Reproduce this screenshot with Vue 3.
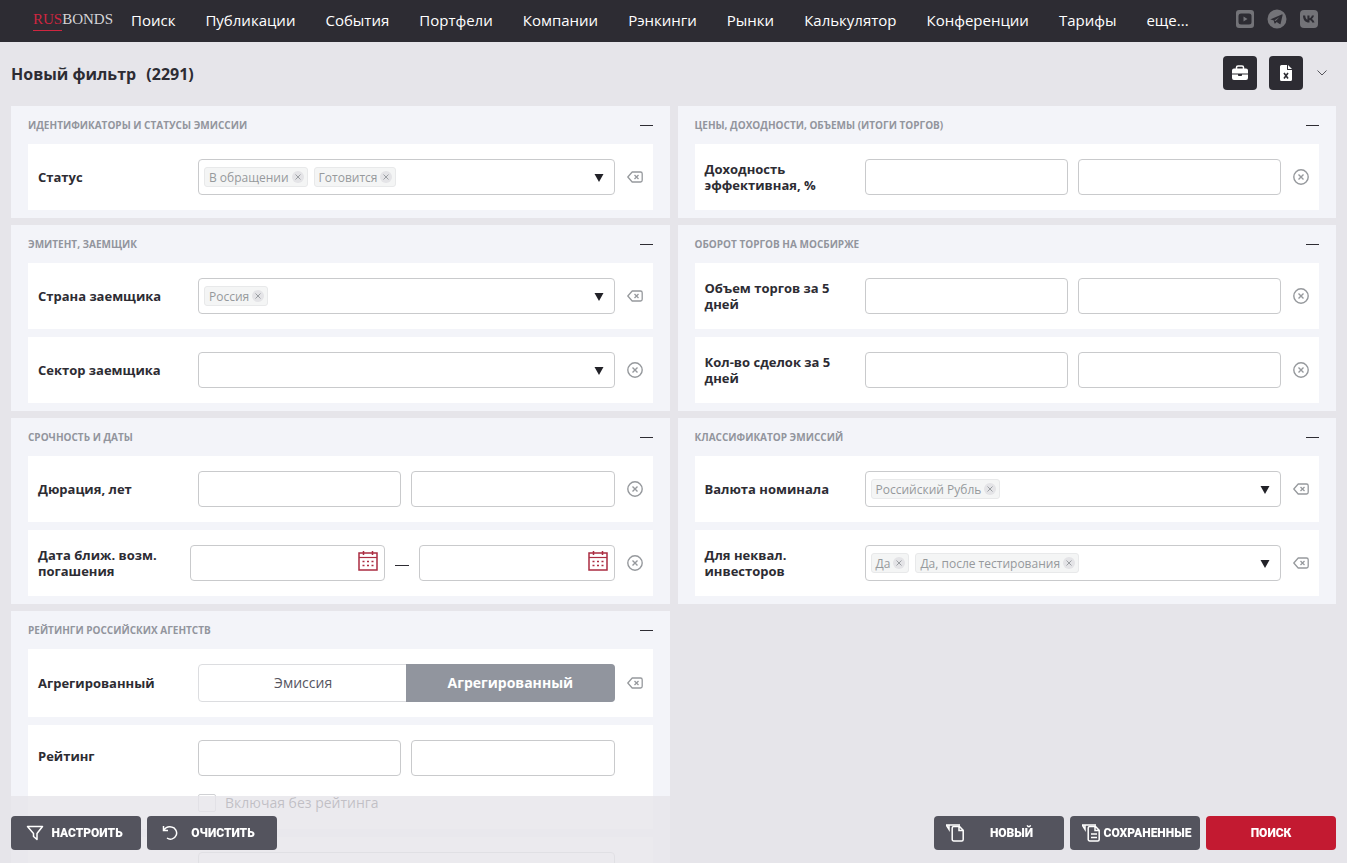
<script setup>
import { ref } from 'vue'

const nav = ['Поиск', 'Публикации', 'События', 'Портфели', 'Компании', 'Рэнкинги', 'Рынки', 'Калькулятор', 'Конференции', 'Тарифы', 'еще...']

const panels = [
  { title: 'Идентификаторы и статусы эмиссии', rows: [
    { id: 'status', label: 'Статус', type: 'select', tags: ['В обращении', 'Готовится'], filled: true },
  ] },
  { title: 'Цены, доходности, объемы (итоги торгов)', rows: [
    { id: 'yield', label: 'Доходность эффективная, %', type: 'range' },
  ] },
  { title: 'Эмитент, заемщик', rows: [
    { id: 'country', label: 'Страна заемщика', type: 'select', tags: ['Россия'], filled: true },
    { id: 'sector', label: 'Сектор заемщика', type: 'select', tags: [] },
  ] },
  { title: 'Оборот торгов на Мосбирже', rows: [
    { id: 'volume', label: 'Объем торгов за 5 дней', type: 'range' },
    { id: 'deals', label: 'Кол-во сделок за 5 дней', type: 'range' },
  ] },
  { title: 'Срочность и даты', rows: [
    { id: 'duration', label: 'Дюрация, лет', type: 'range' },
    { id: 'date', label: 'Дата ближ. возм. погашения', type: 'dates' },
  ] },
  { title: 'Классификатор эмиссий', rows: [
    { id: 'currency', label: 'Валюта номинала', type: 'select', tags: ['Российский Рубль'], filled: true },
    { id: 'unqualified', label: 'Для неквал. инвесторов', type: 'select', tags: ['Да', 'Да, после тестирования'], filled: true },
  ] },
  { title: 'Рейтинги российских агентств', rows: [
    { id: 'aggregated', label: 'Агрегированный', type: 'segment', filled: true },
    { id: 'rating', label: 'Рейтинг', type: 'rating' },
    { id: 'agency', label: '', type: 'select', tags: [] },
  ] },
]

const segment = ref('Агрегированный')
</script>

<template>
  <div class="page">
    <header class="topbar">
      <a class="logo" href="#"><span class="logo-red">RUS</span>BONDS</a>
      <nav class="nav">
        <a v-for="item in nav" :key="item" href="#">{{ item }}</a>
      </nav>
      <div class="social">
        <a href="#" aria-label="YouTube">
          <svg width="20" height="20" viewBox="0 0 20 20"><rect x="1" y="1" width="18" height="18" rx="3" fill="#737378" /><rect x="3.500" y="4.500" width="13" height="11" rx="2.500" fill="#2d2c33" /><path d="M8.500 7.500v5l4-2.500z" fill="#737378" /></svg>
        </a>
        <a href="#" aria-label="Telegram">
          <svg width="20" height="20" viewBox="0 0 20 20"><circle cx="10" cy="10" r="9.500" fill="#737378" /><path d="M3.600 10.200 14.800 5.400c.5-.2.9.1.8.7l-2 8.600c-.1.6-.5.7-1 .4l-2.900-2.100-1.500 1.400c-.4.4-.7.2-.8-.2l-.6-2.700-3-.9c-.6-.1-.6-.2-.2-.4z" fill="#2d2c33" /><path d="M7.400 11.500 12.500 8 8.700 12z" fill="#737378" /></svg>
        </a>
        <a href="#" aria-label="VK">
          <svg width="20" height="20" viewBox="0 0 20 20"><rect x="1" y="1" width="18" height="18" rx="4" fill="#737378" /><path d="M4 6.500h2.200c.2 2.500 1.200 4 2.200 4.300V6.500h2.100v2.700c1.100-.2 2-1.300 2.400-2.700H15c-.3 1.500-1.200 2.800-2.200 3.500 1.100.5 2.100 1.600 2.700 3.500h-2.300c-.4-1.200-1.400-2.200-2.700-2.400v2.400h-.4C6.300 13.500 4.100 10.900 4 6.500z" fill="#2d2c33" /></svg>
        </a>
      </div>
    </header>

    <main class="content">
      <div class="title-row">
        <h1>Новый фильтр <span class="count">(2291)</span></h1>
        <div class="tools">
          <button class="tool" type="button" aria-label="Портфель">
            <svg width="16" height="16" viewBox="0 0 16 16"><path d="M4.500 4V2.600C4.500 1.700 5.100 1 6 1h4c.9 0 1.500.7 1.500 1.600V4" fill="none" stroke="#fff" stroke-width="1.500" /><path d="M2 3.500h12a2 2 0 0 1 2 2v3H0v-3a2 2 0 0 1 2-2zM0 9.500h6v.8c0 .5.3.7.700.7h2.600c.4 0 .7-.2.7-.7v-.8h6V13a2 2 0 0 1-2 2H2a2 2 0 0 1-2-2z" fill="#fff" /></svg>
          </button>
          <button class="tool" type="button" aria-label="Экспорт в Excel">
            <svg width="12" height="16" viewBox="0 0 12 16"><path d="M1.500 0H7v4.500c0 .3.200.5.500.5H12v9.500a1.500 1.500 0 0 1-1.500 1.500h-9A1.500 1.500 0 0 1 0 14.500v-13A1.500 1.500 0 0 1 1.500 0zM8 0l4 4H8z" fill="#fff" /><path d="m4 8 4 5.500M8 8l-4 5.500" stroke="#2d2c33" stroke-width="1.600" /></svg>
          </button>
          <button class="more" type="button" aria-label="Ещё">
            <svg width="10" height="6" viewBox="0 0 10 6"><path d="m.5.5 4.500 4.500L9.500.5" fill="none" stroke="#55555c" /></svg>
          </button>
        </div>
      </div>

      <div class="panels">
        <section v-for="panel in panels" :key="panel.title" class="panel">
          <div class="panel-head">
            <h2>{{ panel.title }}</h2>
            <button class="collapse" type="button" aria-label="Свернуть"></button>
          </div>
          <div class="cards">
            <div v-for="row in panel.rows" :key="row.id" class="card" :class="row.type">
              <label class="name" :for="row.id">{{ row.label }}</label>

              <div v-if="row.type === 'select'" class="field box">
                <span v-for="tag in row.tags" :key="tag" class="tag"><span class="tag-text">{{ tag }}</span>
                  <button type="button" aria-label="Убрать"><svg width="12" height="12" viewBox="0 0 12 12"><circle cx="6" cy="6" r="6" fill="#e4e4e7" /><path d="m3.500 3.500 5 5m0-5-5 5" stroke="#9b9fa3" /></svg></button>
                </span>
                <select :id="row.id" :aria-label="row.label || 'Агентство'"><option></option></select>
                <svg class="arrow" width="10" height="9" viewBox="0 0 10 9"><path d="M.5 1h9L5 9z" fill="#222228" /></svg>
              </div>

              <div v-else-if="row.type === 'range'" class="field pair">
                <input :id="row.id" class="box" type="text" />
                <input class="box" type="text" :aria-label="row.label + ' до'" />
              </div>

              <div v-else-if="row.type === 'dates'" class="field pair">
                <template v-for="n in 2" :key="n">
                  <span v-if="n === 2" class="dash"></span>
                  <div class="box date">
                    <input :id="n === 1 ? row.id : row.id + '-to'" type="text" :aria-label="row.label" />
                    <button type="button" aria-label="Календарь">
                      <svg width="20" height="20" viewBox="0 0 20 20" fill="none" stroke="#ab2d42"><path d="M1 2h18v17H1z" stroke-width="1.500" /><path d="M1 6.500h18" stroke-width="1.200" /><path d="M5.500 0v4M14.500 0v4" stroke-width="1.500" /><path d="M4.500 10.500h2m2.500 0h2m2.500 0h2M4.500 14.500h2m2.500 0h2m2.500 0h2" stroke-width="1.500" /></svg>
                    </button>
                  </div>
                </template>
              </div>

              <div v-else-if="row.type === 'segment'" class="field segments">
                <button
                  v-for="(option, i) in ['Эмиссия', 'Агрегированный']"
                  :id="i === 0 ? row.id : null"
                  :key="option"
                  type="button"
                  :class="{ active: segment === option }"
                  :aria-pressed="segment === option"
                  @click="segment = option"
                >{{ option }}</button>
              </div>

              <div v-else class="field">
                <div class="pair">
                  <input :id="row.id" class="box" type="text" />
                  <input class="box" type="text" aria-label="Рейтинг до" />
                </div>
                <label class="check"><input type="checkbox" />Включая без рейтинга</label>
              </div>

              <button class="clear" :class="{ empty: row.type === 'rating' || !row.label }" type="button" aria-label="Сбросить">
                <svg v-if="row.filled" width="16" height="12" viewBox="0 0 16 12" fill="none" stroke="#96999d"><path d="M5.200 1H13.500A1.700 1.700 0 0 1 15.200 2.700v6.600A1.700 1.700 0 0 1 13.500 11H5.200L.8 6z" stroke-width="1.300" stroke-linejoin="round" /><path d="m7.500 4 4 4m0-4-4 4" stroke-width="1.300" /></svg>
                <svg v-else width="16" height="16" viewBox="0 0 16 16" fill="none" stroke="#96999d"><circle cx="8" cy="8" r="7.200" stroke-width="1.400" /><path d="m5.500 5.500 5 5m0-5-5 5" stroke-width="1.400" /></svg>
              </button>
            </div>
          </div>
        </section>
      </div>
    </main>

    <footer class="actions">
      <button class="action" type="button">
        <svg width="18" height="16" viewBox="0 0 18 16" fill="none" stroke="#fff" stroke-width="1.500" stroke-linejoin="round"><path d="M1.500 1.500h15L11 8.500v6L7.500 11.500v-3z" /></svg>
        <span>Настроить</span>
      </button>
      <button class="action" type="button">
        <svg width="18" height="16" viewBox="0 0 18 16" fill="none" stroke="#fff" stroke-width="1.500"><path d="M1.500 1v4.500H6M1.800 5.300C3.500 2.500 6.500 1.300 9.500 2a6.100 6.100 0 1 1-4.500 11" /></svg>
        <span>Очистить</span>
      </button>
      <div class="spacer"></div>
      <button class="action doc" type="button">
        <svg width="18" height="18" viewBox="0 0 18 18" fill="none" stroke="#fff" stroke-width="1.500"><path d="M0 1h14M3 1v4.500L.5 1.500" /><path d="M7.500 2.500h6l3.700 3.700V15.500a1.500 1.500 0 0 1-1.500 1.500h-8A1.500 1.500 0 0 1 6.200 15.500V4a1.500 1.500 0 0 1 1.300-1.500zM13 1.500v5h4.500" /></svg>
        <span>Новый</span>
      </button>
      <button class="action doc" type="button">
        <svg width="18" height="18" viewBox="0 0 18 18" fill="none" stroke="#fff" stroke-width="1.500"><path d="M0 1h14M3 1v4.500L.5 1.500" /><path d="M7.500 2.500h6l3.700 3.700V15.500a1.500 1.500 0 0 1-1.500 1.500h-8A1.500 1.500 0 0 1 6.200 15.500V4a1.500 1.500 0 0 1 1.300-1.500zM13 1.500v5h4.500M9 10h6M9 13.500h6" /></svg>
        <span>Сохраненные</span>
      </button>
      <button class="action primary" type="submit"><span>Поиск</span></button>
    </footer>
  </div>
</template>

<style>
body { margin: 0; background: #e6e5ea; }
</style>

<style scoped>
* { box-sizing: border-box; }
button, input, select { font: inherit; margin: 0; padding: 0; border: 0; background: none; color: inherit; }
button { cursor: pointer; }
svg { display: block; flex: none; }
a { color: inherit; text-decoration: none; }

.page { height: 100vh; overflow-y: auto; scrollbar-width: none; background: #e6e5ea; color: #2d2c33; font-family: "Open Sans", sans-serif; }

.topbar { display: flex; align-items: center; height: 42px; padding: 0 28px 0 33px; background: #2d2c33; color: #fff; }
.logo { width: 83px; margin-bottom: 4px; font: 15px/22px "Liberation Serif", serif; color: #d5d5d8; }
.logo-red { display: inline-block; color: #cf2640; border-bottom: 1px solid #cf2640; }
.nav { flex: 1; display: flex; font-size: 15px; line-height: 40px; padding-bottom: 2px; white-space: nowrap; }
.nav a { padding: 0 15px; }
.social { display: flex; gap: 12px; margin-bottom: 4px; }

.content { padding: 0 11px 80px; }
.title-row { display: flex; align-items: center; justify-content: space-between; height: 64px; padding-bottom: 2px; }
h1 { margin: 0; padding-top: 2px; font-size: 16px; line-height: 24px; font-weight: 700; }
.count { margin-left: 6px; }
.tools { display: flex; align-items: center; gap: 12px; padding-right: 7px; }
.tool { display: flex; align-items: center; justify-content: center; width: 34px; height: 34px; border-radius: 4px; background: #2d2c33; }
.more { display: flex; align-items: center; justify-content: center; width: 14px; height: 34px; }

.panels { display: grid; grid-template-columns: repeat(2, minmax(0, 1fr)); gap: 7px 8px; }
.panel { background: #f3f4f9; padding: 0 17px 8px; }
.panel-head { display: flex; align-items: center; justify-content: space-between; height: 38px; }
h2 { margin: 0; font-size: 10px; line-height: 16px; font-weight: 700; text-transform: uppercase; color: #92959d; }
.collapse { width: 13px; height: 14px; background: linear-gradient(#2d2c33, #2d2c33) center / 13px 1px no-repeat; }

.cards { display: flex; flex-direction: column; gap: 8px; }
.card { display: flex; align-items: center; padding: 15px 10px; background: #fff; }
.name { width: 160px; padding-right: 20px; font-size: 13px; line-height: 16px; font-weight: 700; }
.field { flex: 1; min-width: 0; }
.box { display: flex; align-items: center; gap: 6px; height: 36px; padding: 0 5px; border: 1px solid #c9cacc; border-radius: 4px; background: #fff; }
.box select { flex: 1; min-width: 0; align-self: stretch; appearance: none; }
.arrow { margin-right: 5px; pointer-events: none; }
.tag { display: flex; align-items: center; gap: 3px; height: 20px; padding: 0 3px 0 4px; border: 1px solid #e8e9ea; border-radius: 3px; background: #f4f5f5; color: #96999c; font-size: 12px; line-height: 18px; white-space: nowrap; }
.tag-text { padding-top: 2px; }
.pair { display: flex; align-items: center; gap: 10px; }
.pair .box { flex: 1; min-width: 0; }
.dates .name { width: 152px; }
.date input { flex: 1; min-width: 0; height: 34px; }
.date button { margin: 0 1px 4px 0; }
.dash { width: 14px; height: 1px; margin-top: 4px; background: #2d2c33; }
.segments { display: flex; height: 38px; border: 1px solid #dcdde0; border-radius: 4px; font-size: 14px; color: #55555f; }
.segments button { flex: 1; padding-bottom: 2px; }
.segments .active { margin: -1px; border-radius: 0 4px 4px 0; background: #91959e; color: #fff; font-weight: 700; }
.rating { align-items: flex-start; }
.rating .name { padding-top: 8px; }
.check { display: flex; align-items: center; gap: 9px; height: 22px; margin-top: 16px; font-size: 14px; line-height: 22px; color: #2d2c33; }
.check input { width: 18px; height: 18px; border: 1px solid #d0d1d4; border-radius: 2px; appearance: none; }
.clear { display: flex; align-items: center; justify-content: center; width: 16px; height: 16px; margin-left: 12px; }
.clear.empty { visibility: hidden; }

.actions { position: fixed; left: 0; right: 0; bottom: 0; display: flex; gap: 6px; padding: 20px 11px 13px; background: rgba(230, 229, 234, 0.8); }
.spacer { flex: 1; }
.action { display: flex; align-items: center; width: 130px; height: 34px; padding: 0 11px 0 15px; border-radius: 4px; background: #54545e; color: #fff; font: 900 12px/16px Roboto, sans-serif; text-transform: uppercase; }
.action span { flex: 1; text-align: center; }
.doc { padding: 0 5px 0 12px; }
.primary { padding: 0; background: #c31a31; }
</style>
